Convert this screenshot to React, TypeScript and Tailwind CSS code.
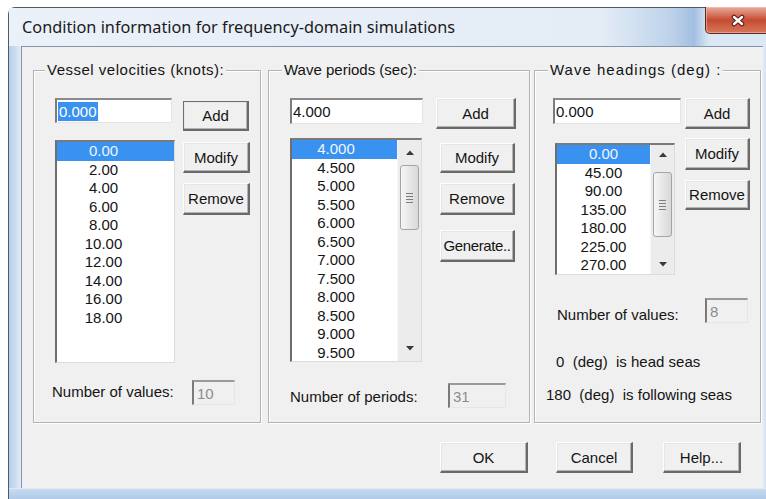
import React from "react";

type BtnProps = { children: React.ReactNode; className?: string; strong?: boolean };

function Btn({ children, className = "", strong = false }: BtnProps) {
  const edge = strong
    ? "border-t border-l border-t-[#6f6f6f] border-l-[#6f6f6f]"
    : "border-t border-l border-t-[#fdfdfd] border-l-[#fdfdfd]";
  return (
    <div
      className={`flex shrink-0 items-center justify-center overflow-hidden whitespace-nowrap bg-[#f0f0f0] text-[15px] leading-none text-[#141414] border-r-2 border-b-2 border-r-[#6a6a6a] border-b-[#6a6a6a] shadow-[inset_-1px_-1px_0_#b4b4b4,inset_1px_1px_0_#e6e6e6] ${edge} ${className}`}
    >
      {children}
    </div>
  );
}

function TextBox({ children, className = "" }: { children: React.ReactNode; className?: string }) {
  return (
    <div
      className={`flex shrink-0 items-center bg-white pl-[1px] text-[15px] leading-none text-[#141414] border-t-2 border-l-2 border-t-[#8a8a8a] border-l-[#7c7c7c] border-r border-b border-r-[#e4e4e4] border-b-[#e4e4e4] ${className}`}
    >
      {children}
    </div>
  );
}

function CountBox({ value, className = "" }: { value: string; className?: string }) {
  return (
    <div
      className={`flex shrink-0 items-center bg-[#f0f0f0] pl-[3px] text-[15px] leading-none text-[#8c8c8c] border-t-2 border-l-2 border-t-[#9a9a9a] border-l-[#7a7a7a] border-r border-b border-r-[#e6e6e6] border-b-[#e6e6e6] ${className}`}
    >
      {value}
    </div>
  );
}

function Arrow({ up }: { up: boolean }) {
  return (
    <svg width="8" height="5" viewBox="0 0 8 5">
      <path d={up ? "M0 5 L4 0.5 L8 5 Z" : "M0 0 L4 4.5 L8 0 Z"} fill="#3a3a3a" />
    </svg>
  );
}

type ScrollProps = { upH: number; thumbGap: number; thumbH: number; downH: number };

function VScroll({ upH, thumbGap, thumbH, downH }: ScrollProps) {
  return (
    <div className="flex h-full w-[24px] shrink-0 flex-col bg-[#ececec] border-l border-l-[#f6f6f6]">
      <div className="flex shrink-0 items-center justify-center" style={{ height: upH }}>
        <Arrow up />
      </div>
      <div className="flex-1">
        <div
          className="mx-[2px] flex flex-col items-center justify-center gap-[2px] rounded-[3px] border border-[#a4a4a4] bg-gradient-to-r from-[#f6f6f6] to-[#d8d8d8]"
          style={{ marginTop: thumbGap, height: thumbH }}
        >
          <div className="h-px w-[7px] bg-[#7d7d7d]" />
          <div className="h-px w-[7px] bg-[#7d7d7d]" />
          <div className="h-px w-[7px] bg-[#7d7d7d]" />
          <div className="h-px w-[7px] bg-[#7d7d7d]" />
        </div>
      </div>
      <div className="flex shrink-0 items-center justify-center" style={{ height: downH }}>
        <Arrow up={false} />
      </div>
    </div>
  );
}

type ListProps = {
  items: string[];
  className: string;
  textClass: string;
  scroll?: ScrollProps;
};

function ListBox({ items, className, textClass, scroll }: ListProps) {
  return (
    <div
      className={`flex shrink-0 overflow-hidden bg-white border-t-2 border-l-2 border-t-[#7a7a7a] border-l-[#6e6e6e] border-r border-b border-r-[#dcdcdc] border-b-[#dcdcdc] ${className}`}
    >
      <div className="flex-1 overflow-hidden">
        {items.map((v, i) => (
          <div
            key={v}
            className={`h-[18.5px] text-center text-[15px] leading-[18.5px] ${textClass} ${
              i === 0 ? "bg-[#3a92f0] text-[#eef6ff]" : "text-[#141414]"
            }`}
          >
            {v}
          </div>
        ))}
      </div>
      {scroll && <VScroll {...scroll} />}
    </div>
  );
}

type GroupProps = { label: string; labelClass?: string; className: string; children: React.ReactNode };

function Group({ label, labelClass = "", className, children }: GroupProps) {
  return (
    <div
      className={`relative shrink-0 border border-[#b3b3b3] shadow-[1px_1px_0_#ffffff,inset_1px_1px_0_#ffffff] ${className}`}
    >
      <div
        className={`absolute -top-[10px] left-[11px] whitespace-nowrap bg-[#f0f0f0] px-[2px] text-[15px] leading-[18px] text-[#141414] ${labelClass}`}
      >
        {label}
      </div>
      {children}
    </div>
  );
}

const velocities = ["0.00", "2.00", "4.00", "6.00", "8.00", "10.00", "12.00", "14.00", "16.00", "18.00"];
const periods = ["4.000", "4.500", "5.000", "5.500", "6.000", "6.500", "7.000", "7.500", "8.000", "8.500", "9.000", "9.500"];
const headings = ["0.00", "45.00", "90.00", "135.00", "180.00", "225.00", "270.00"];

export default function App() {
  return (
    <div className="h-[499px] w-[766px] overflow-hidden bg-white font-['Liberation_Sans',Arial,sans-serif]">
      {/* window frame */}
      <div className="ml-[8px] mt-[7px] flex h-[495px] w-[762px] flex-col rounded-tl-[7px] border-l border-t border-[#4e5a68] bg-gradient-to-b from-[#e6eef8] via-[#d3e2f2] to-[#b8d0ea]">
        {/* title bar */}
        <div className="flex h-[38px] shrink-0 bg-[linear-gradient(90deg,#ebf1f9_0%,#e4ecf6_78%,#bdd2ea_87%,#a3bfe0_90%,#dce7f4_92%)]">
          <div className="flex items-center pl-[13px] font-['Noto_Sans',sans-serif] text-[16.3px] text-[#1a1a1a]">
            Condition information for frequency-domain simulations
          </div>
          <div className="ml-auto mr-[1px] -mt-px flex h-[27px] w-[64px] items-center rounded-bl-[5px] border border-t-0 border-[#5b2a22] bg-gradient-to-b from-[#e7ab9c] via-[#c64a31] to-[#d77759] pl-[25px] shadow-[inset_0_0_0_1px_rgba(255,210,200,0.45)]">
            <svg width="14" height="13" viewBox="0 0 14 13">
              <path d="M3 3 L11 10 M11 3 L3 10" stroke="#5a1f15" strokeWidth="4.6" strokeLinecap="round" />
              <path d="M3 3 L11 10 M11 3 L3 10" stroke="#ffffff" strokeWidth="2.4" strokeLinecap="round" />
            </svg>
          </div>
        </div>

        <div className="flex shrink-0">
          {/* left frame */}
          <div className="w-[12px] shrink-0 bg-gradient-to-r from-[#b7cfea] via-[#c9dbef] to-[#e3edf8]" />
          {/* client area */}
          <div className="flex h-[442px] w-[742px] shrink-0 flex-col border-l border-t border-[#8394aa] bg-[#f0f0f0]">
            <div className="mt-[23px] flex pl-[11px]">
              {/* vessel velocities */}
              <Group label="Vessel velocities (knots):" labelClass="tracking-[0.5px]" className="h-[353px] w-[228px]">
                <div className="flex items-start pl-[21px] pt-[27px]">
                  <TextBox className="h-[25px] w-[117px]">
                    <span className="bg-[#3a92f0] px-[1px] py-[2px] text-white">0.000</span>
                  </TextBox>
                  <Btn strong className="ml-[11px] mt-[3px] h-[30px] w-[66px]">Add</Btn>
                </div>
                <div className="mt-[9px] flex items-start pl-[21px]">
                  <ListBox items={velocities} className="h-[223px] w-[120px]" textClass="pr-[24px]" />
                  <div className="ml-[8px] flex flex-col">
                    <Btn className="mt-[2px] h-[31px] w-[67px]">Modify</Btn>
                    <Btn className="mt-[10px] h-[32px] w-[67px]">Remove</Btn>
                  </div>
                </div>
                <div className="mt-[17px] flex items-center pl-[18px]">
                  <div className="w-[140px] text-[15px] text-[#141414]">Number of values:</div>
                  <CountBox value="10" className="h-[25px] w-[43px]" />
                </div>
              </Group>

              {/* wave periods */}
              <Group label="Wave periods (sec):" labelClass="left-[13px]" className="ml-[7px] h-[353px] w-[262px]">
                <div className="flex items-start pl-[21px] pt-[27px]">
                  <TextBox className="h-[26px] w-[133px]">4.000</TextBox>
                  <Btn className="ml-[13px] h-[31px] w-[80px]">Add</Btn>
                </div>
                <div className="mt-[9px] flex items-start pl-[21px]">
                  <ListBox
                    items={periods}
                    className="h-[224px] w-[132px]"
                    textClass="pr-[17px]"
                    scroll={{ upH: 24, thumbGap: 1, thumbH: 65, downH: 26 }}
                  />
                  <div className="ml-[18px] flex flex-col">
                    <Btn className="mt-[5px] h-[30px] w-[75px]">Modify</Btn>
                    <Btn className="mt-[10px] h-[32px] w-[75px]">Remove</Btn>
                    <Btn className="mt-[15px] h-[32px] w-[75px] tracking-[-0.4px]">Generate..</Btn>
                  </div>
                </div>
                <div className="mt-[21px] flex items-center pl-[21px]">
                  <div className="w-[158px] pt-[3px] text-[15px] text-[#141414]">Number of periods:</div>
                  <CountBox value="31" className="h-[25px] w-[58px]" />
                </div>
              </Group>

              {/* wave headings */}
              <Group label="Wave headings (deg) :" labelClass="left-[13px] tracking-[1px]" className="ml-[4px] h-[353px] w-[227px]">
                <div className="flex items-start pl-[18px] pt-[27px]">
                  <TextBox className="h-[26px] w-[128px]">0.000</TextBox>
                  <Btn className="ml-[4px] h-[31px] w-[65px]">Add</Btn>
                </div>
                <div className="mt-[9px] flex items-start pl-[20px]">
                  <ListBox
                    items={headings}
                    className="mt-[5px] h-[132px] w-[120px]"
                    textClass=""
                    scroll={{ upH: 19, thumbGap: 8, thumbH: 65, downH: 20 }}
                  />
                  <div className="ml-[10px] flex flex-col">
                    <Btn className="h-[32px] w-[65px]">Modify</Btn>
                    <Btn className="mt-[10px] h-[30px] w-[65px]">Remove</Btn>
                  </div>
                </div>
                <div className="mt-[20px] flex items-center pl-[22px]">
                  <div className="w-[148px] pt-[9px] text-[15px] text-[#141414]">Number of values:</div>
                  <CountBox value="8" className="h-[25px] w-[43px]" />
                </div>
                <div className="mt-[26px] whitespace-pre pl-[21px] text-[15px] leading-[18px] text-[#141414]">
                  {"0  (deg)  is head seas"}
                </div>
                <div className="mt-[15px] whitespace-pre pl-[11px] text-[15px] leading-[18px] text-[#141414]">
                  {"180  (deg)  is following seas"}
                </div>
              </Group>
            </div>

            {/* dialog buttons */}
            <div className="mt-[19px] flex justify-end pr-[22px]">
              <Btn className="h-[31px] w-[88px]">OK</Btn>
              <Btn className="ml-[28px] h-[31px] w-[77px]">Cancel</Btn>
              <Btn className="ml-[30px] h-[31px] w-[78px]">Help...</Btn>
            </div>
          </div>
          {/* right frame */}
          <div className="flex-1 bg-gradient-to-r from-[#e3edf8] to-[#bcd2ea]" />
        </div>
        {/* bottom frame */}
        <div className="flex-1 border-t border-[#dfe9f5] bg-gradient-to-b from-[#c7daf0] to-[#a9c5e6]" />
      </div>
    </div>
  );
}
